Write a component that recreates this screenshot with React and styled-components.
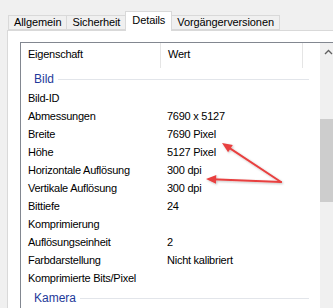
import React from 'react';
import styled, { createGlobalStyle } from 'styled-components';

const Global = createGlobalStyle`
  html, body {
    margin: 0;
    padding: 0;
    background: #f0f0f0;
    overflow: hidden;
  }
  body {
    font-family: 'Liberation Sans', Arial, sans-serif;
    font-size: 11px;
    letter-spacing: -0.25px;
    color: #000;
  }
`;

const Page = styled.div`
  position: relative;
  width: 333px;
  height: 308px;
  overflow: hidden;
  padding-top: 11px;
  box-sizing: border-box;
`;

const TabStrip = styled.div`
  display: flex;
  align-items: flex-end;
  padding-left: 8px;
  height: 19px;
`;

const Tab = styled.div`
  position: relative;
  box-sizing: border-box;
  height: ${p => (p.active ? '20px' : '15px')};
  margin-bottom: ${p => (p.active ? '-1px' : '0')};
  margin-left: ${p => (p.first ? '0' : '-1px')};
  padding: ${p => (p.active ? '1px 6px 0 6px' : '0 5px 0 5px')};
  border: 1px solid #d9d9d9;
  border-bottom: ${p => (p.active ? 'none' : '1px solid #d9d9d9')};
  background: ${p => (p.active ? '#ffffff' : '#f0f0f0')};
  z-index: ${p => (p.active ? 2 : 1)};
  line-height: ${p => (p.active ? '14px' : '13px')};
  letter-spacing: -0.1px;
  white-space: nowrap;
`;

const Panel = styled.div`
  margin-left: 7px;
  width: 400px;
  height: 300px;
  background: #ffffff;
  border: 1px solid #d9d9d9;
  padding: 11px 0 0 12px;
  box-sizing: border-box;
`;

const ListBox = styled.div`
  display: flex;
  width: 330px;
  height: 300px;
  border: 1px solid #828790;
  box-sizing: border-box;
  background: #ffffff;
`;

const Content = styled.div`
  width: 299px;
  flex: none;
  display: flex;
  flex-direction: column;
`;

const Header = styled.div`
  display: flex;
  height: 25px;
`;

const HeadCell = styled.div`
  width: ${p => p.w}px;
  flex: none;
  display: flex;
  align-items: center;
  padding-left: ${p => p.pad}px;
  padding-bottom: 3px;
  box-sizing: border-box;
  border-right: 1px solid #e5e5e5;
`;

const Row = styled.div`
  display: flex;
  height: 18px;
  align-items: center;
`;

const Cell = styled.div`
  width: ${p => p.w}px;
  flex: none;
  padding-left: ${p => p.pad}px;
  box-sizing: border-box;
  white-space: nowrap;
`;

const Group = styled.div`
  display: flex;
  align-items: center;
  height: 21px;
  padding: 1px 0 0 13px;
  box-sizing: border-box;
  width: 288px;
  color: #1e3a9a;
  font-size: 12px;
  letter-spacing: 0;
`;

const GroupLine = styled.div`
  flex: 1;
  height: 1px;
  margin-left: 4px;
  margin-top: 1px;
  background: #e2e5ea;
`;

const ScrollBar = styled.div`
  width: 17px;
  flex: none;
  background: #f0f0f0;
  display: flex;
  flex-direction: column;
`;

const ScrollBtn = styled.div`
  height: 17px;
  display: flex;
  align-items: center;
  justify-content: center;
`;

const Thumb = styled.div`
  margin-top: 59px;
  height: 83px;
  background: #cdcdcd;
`;

const Arrows = styled.svg`
  position: absolute;
  left: 0;
  top: 0;
  pointer-events: none;
`;

const rows = [
  ['Bild-ID', ''],
  ['Abmessungen', '7690 x 5127'],
  ['Breite', '7690 Pixel'],
  ['Höhe', '5127 Pixel'],
  ['Horizontale Auflösung', '300 dpi'],
  ['Vertikale Auflösung', '300 dpi'],
  ['Bittiefe', '24'],
  ['Komprimierung', ''],
  ['Auflösungseinheit', '2'],
  ['Farbdarstellung', 'Nicht kalibriert'],
  ['Komprimierte Bits/Pixel', ''],
];

const tabs = ['Allgemein', 'Sicherheit', 'Details', 'Vorgängerversionen'];

const RedArrow = ({ x1, y1, x2, y2 }) => {
  const a = Math.atan2(y2 - y1, x2 - x1);
  const len = 11;
  const spread = 0.4;
  const p1 = [x2 - len * Math.cos(a - spread), y2 - len * Math.sin(a - spread)];
  const p2 = [x2 - len * Math.cos(a + spread), y2 - len * Math.sin(a + spread)];
  return (
    <g>
      <line x1={x1} y1={y1} x2={x2 - 6 * Math.cos(a)} y2={y2 - 6 * Math.sin(a)} stroke="#e8403f" strokeWidth="2" strokeLinecap="round" />
      <polygon points={`${x2},${y2} ${p1[0]},${p1[1]} ${p2[0]},${p2[1]}`} fill="#e8403f" />
    </g>
  );
};

export default function App() {
  return (
    <Page>
      <Global />
      <TabStrip>
        {tabs.map((t, i) => (
          <Tab key={t} first={i === 0} active={t === 'Details'}>
            {t}
          </Tab>
        ))}
      </TabStrip>
      <Panel>
        <ListBox>
          <Content>
            <Header>
              <HeadCell w={140} pad={7}>Eigenschaft</HeadCell>
              <HeadCell w={142} pad={7}>Wert</HeadCell>
            </Header>
            <Group>
              Bild
              <GroupLine />
            </Group>
            {rows.map(([k, v]) => (
              <Row key={k}>
                <Cell w={140} pad={7}>{k}</Cell>
                <Cell w={150} pad={6}>{v}</Cell>
              </Row>
            ))}
            <Group>
              Kamera
              <GroupLine />
            </Group>
          </Content>
          <ScrollBar>
            <ScrollBtn>
              <svg width="9" height="6" viewBox="0 0 9 6">
                <path d="M1 5 L4.5 1.5 L8 5" fill="none" stroke="#606060" strokeWidth="1.3" />
              </svg>
            </ScrollBtn>
            <Thumb />
          </ScrollBar>
        </ListBox>
      </Panel>
      <Arrows width="333" height="308" viewBox="0 0 333 308">
        <defs>
          <filter id="sh" x="-20%" y="-20%" width="140%" height="140%">
            <feDropShadow dx="1" dy="1" stdDeviation="1" floodColor="#000" floodOpacity="0.25" />
          </filter>
        </defs>
        <g filter="url(#sh)">
          <RedArrow x1={281} y1={182} x2={222} y2={143} />
          <RedArrow x1={281} y1={182} x2={206} y2={179} />
        </g>
      </Arrows>
    </Page>
  );
}
